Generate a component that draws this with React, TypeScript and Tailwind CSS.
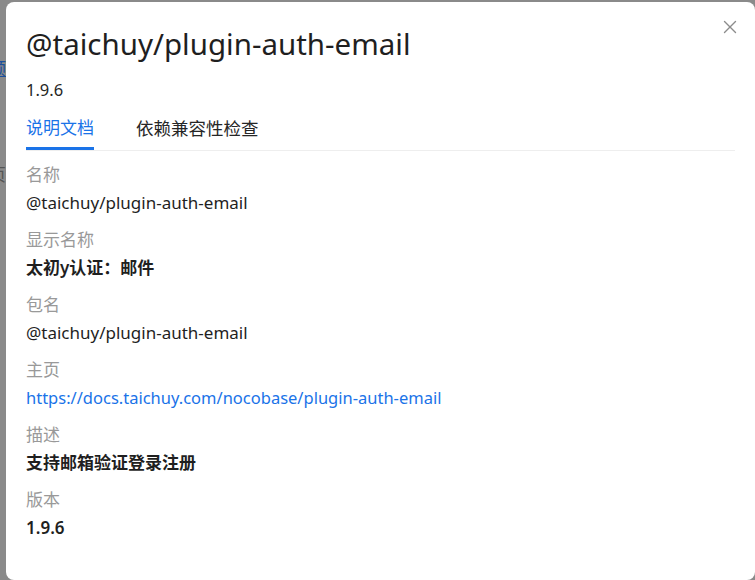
import { X } from "lucide-react";

const fields = [
  { label: "名称", value: "@taichuy/plugin-auth-email" },
  { label: "显示名称", value: "太初y认证：邮件", strong: true },
  { label: "包名", value: "@taichuy/plugin-auth-email" },
  { label: "主页", value: "https://docs.taichuy.com/nocobase/plugin-auth-email", link: true },
  { label: "描述", value: "支持邮箱验证登录注册", strong: true },
  { label: "版本", value: "1.9.6", strong: true },
];

export default function App() {
  return (
    <div
      className="flex h-[580px] w-[755px] overflow-hidden bg-[#8a8a8a] pt-[2px]"
      style={{ fontFamily: '"Noto Sans", "Noto Sans CJK SC", sans-serif' }}
    >
      {/* dimmed page behind the modal */}
      <div className="w-[6px] shrink-0 overflow-hidden">
        <div className="ml-[-11px] mt-[55px] text-[17px] leading-[24px] text-[#1a4f9c] underline">预</div>
        <div className="ml-[-11px] mt-[82px] text-[17px] leading-[24px] text-[#555]">页</div>
      </div>
      <div className="relative flex-1 rounded-[8px] bg-white pl-[20px] pr-[20px] pt-[22px]">
        <button className="absolute right-[14px] top-[14px] text-[#8c8c8c]">
          <X size={22} strokeWidth={1.5} />
        </button>
        <h1 className="text-[29.5px] leading-[40px] text-[#1f1f1f]">@taichuy/plugin-auth-email</h1>
        <div className="mt-[14px] text-[16.5px] leading-[24px] text-[#262626]">1.9.6</div>

        <div className="mt-[14px] flex border-b border-[#eeeeee]">
          <div className="border-b-[3px] border-[#1a73e8] pb-[7px] text-[17px] leading-[24px] text-[#1a73e8]">
            说明文档
          </div>
          <div className="ml-[42px] pb-[7px] text-[17.5px] leading-[24px] text-[#262626]">依赖兼容性检查</div>
        </div>

        <div className="mt-[12px] flex flex-col gap-[13px]">
          {fields.map((f) => (
            <div key={f.label} className="flex flex-col gap-[4px]">
              <div className="text-[17px] leading-[24px] text-[#999999]">{f.label}</div>
              {f.link ? (
                <a className="text-[16.5px] leading-[24px] text-[#1a73e8]">{f.value}</a>
              ) : (
                <div
                  className={
                    f.strong
                      ? "text-[17px] font-semibold leading-[24px] text-[#1f1f1f]"
                      : "text-[17px] leading-[24px] text-[#1f1f1f]"
                  }
                >
                  {f.value}
                </div>
              )}
            </div>
          ))}
        </div>
      </div>
    </div>
  );
}
